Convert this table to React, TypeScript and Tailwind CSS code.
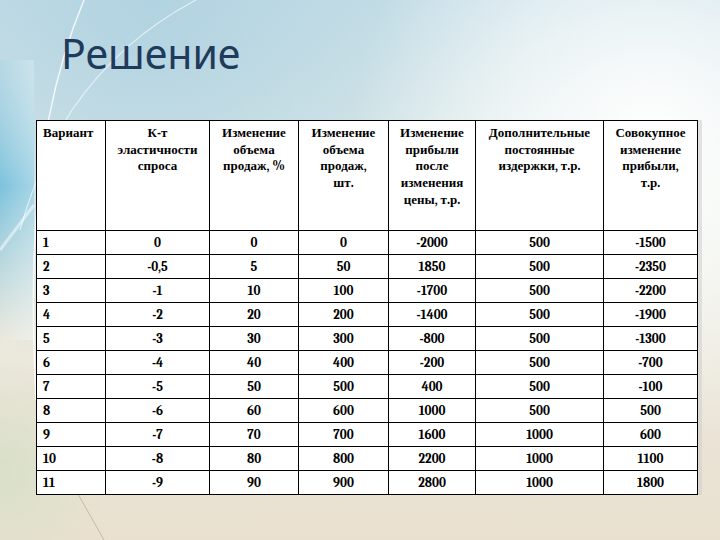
import React from 'react'

const headers = [
  ['Вариант'],
  ['К-т', 'эластичности', 'спроса'],
  ['Изменение', 'объема', 'продаж, %'],
  ['Изменение', 'объема', 'продаж,', 'шт.'],
  ['Изменение', 'прибыли', 'после', 'изменения', 'цены, т.р.'],
  ['Дополнительные', 'постоянные', 'издержки, т.р.'],
  ['Совокупное', 'изменение', 'прибыли,', 'т.р.'],
]

const rows = [
  ['1', '0', '0', '0', '-2000', '500', '-1500'],
  ['2', '-0,5', '5', '50', '1850', '500', '-2350'],
  ['3', '-1', '10', '100', '-1700', '500', '-2200'],
  ['4', '-2', '20', '200', '-1400', '500', '-1900'],
  ['5', '-3', '30', '300', '-800', '500', '-1300'],
  ['6', '-4', '40', '400', '-200', '500', '-700'],
  ['7', '-5', '50', '500', '400', '500', '-100'],
  ['8', '-6', '60', '600', '1000', '500', '500'],
  ['9', '-7', '70', '700', '1600', '1000', '600'],
  ['10', '-8', '80', '800', '2200', '1000', '1100'],
  ['11', '-9', '90', '900', '2800', '1000', '1800'],
]

const widths = ['w-[69px]', 'w-[104px]', 'w-[89px]', 'w-[90px]', 'w-[87px]', 'w-[128px]', 'w-[94px]']

function Backdrop() {
  return (
    <svg className="absolute inset-0" width="720" height="540" viewBox="0 0 720 540">
      <defs>
        <linearGradient id="base" x1="0" y1="0" x2="0" y2="1">
          <stop offset="0" stopColor="#cbe1e9" />
          <stop offset="0.4" stopColor="#ebf0e8" />
          <stop offset="0.75" stopColor="#ebe5d8" />
          <stop offset="1" stopColor="#e9e0cf" />
        </linearGradient>
        <radialGradient id="glow" cx="650" cy="140" r="300" gradientUnits="userSpaceOnUse">
          <stop offset="0" stopColor="#ffffff" stopOpacity="1" />
          <stop offset="1" stopColor="#ffffff" stopOpacity="0" />
        </radialGradient>
        <radialGradient id="blue" cx="150" cy="0" r="380" gradientUnits="userSpaceOnUse">
          <stop offset="0" stopColor="#b2d3e1" stopOpacity="1" />
          <stop offset="1" stopColor="#b2d3e1" stopOpacity="0" />
        </radialGradient>
        <linearGradient id="cyan" x1="0" y1="0" x2="0" y2="1">
          <stop offset="0" stopColor="#a7d3e3" stopOpacity="0.4" />
          <stop offset="0.45" stopColor="#7cc2dc" stopOpacity="1" />
          <stop offset="1" stopColor="#a9cdd6" stopOpacity="0" />
        </linearGradient>
        <linearGradient id="cyanFade" x1="0" y1="0" x2="1" y2="0">
          <stop offset="0" stopColor="#ffffff" stopOpacity="0" />
          <stop offset="1" stopColor="#ffffff" stopOpacity="0.9" />
        </linearGradient>
        <radialGradient id="green" cx="0" cy="470" r="110" gradientUnits="userSpaceOnUse">
          <stop offset="0" stopColor="#d8e0c9" stopOpacity="1" />
          <stop offset="1" stopColor="#d8e0c9" stopOpacity="0" />
        </radialGradient>
      </defs>
      <rect width="720" height="540" fill="url(#base)" />
      <rect width="720" height="540" fill="url(#blue)" />
      <rect width="720" height="540" fill="url(#glow)" />
      <rect x="0" y="60" width="34" height="280" fill="url(#cyan)" />
      <rect x="0" y="60" width="34" height="280" fill="url(#cyanFade)" opacity="0.35" />
      <rect width="720" height="540" fill="url(#green)" />
      <path d="M84 0 Q38 110 34 260 Q32 330 36 400" fill="none" stroke="#ffffff" strokeOpacity="0.8" strokeWidth="1.5" />
      <path d="M196 0 Q120 40 72 110 Q40 160 20 230" fill="none" stroke="#ffffff" strokeOpacity="0.6" strokeWidth="1.2" />
      <path d="M0 250 L34 205" fill="none" stroke="#ffffff" strokeOpacity="0.5" strokeWidth="3" />
      <path d="M78 494 L104 540" fill="none" stroke="#b3ab9b" strokeOpacity="0.7" strokeWidth="1" />
    </svg>
  )
}

export default function App() {
  return (
    <div className="relative h-[540px] w-[720px] overflow-hidden">
      <Backdrop />
      <div className="relative">
        <h1 className="ml-[61px] mt-[28px] text-[41px] font-normal leading-[50px] text-[#1f3a5a]">
          Решение
        </h1>

        {/* table */}
        <div className="ml-[36px] mt-[42px] w-[661px] shadow-[5px_0_0_rgba(205,205,205,0.55)]">
          <table className="w-[661px] table-fixed border-collapse bg-white font-serif text-[13px] font-bold text-black">
            <thead>
              <tr className="h-[110px]">
                {headers.map((lines, i) => (
                  <th
                    key={i}
                    className={`${widths[i]} border border-black px-1 pt-[4px] align-top font-bold leading-[16.7px] ${
                      i === 0 ? 'pl-[6px] text-left' : 'text-center'
                    }`}
                  >
                    {lines.map((l, j) => (
                      <div key={j}>{l}</div>
                    ))}
                  </th>
                ))}
              </tr>
            </thead>
            <tbody>
              {rows.map((r, i) => (
                <tr key={i} className="h-[24px]">
                  {r.map((c, j) => (
                    <td
                      key={j}
                      className={`border border-black p-0 leading-[16px] ${j === 0 ? 'pl-[6px] text-left' : 'text-center'}`}
                    >
                      {c}
                    </td>
                  ))}
                </tr>
              ))}
            </tbody>
          </table>
        </div>
      </div>
    </div>
  )
}
